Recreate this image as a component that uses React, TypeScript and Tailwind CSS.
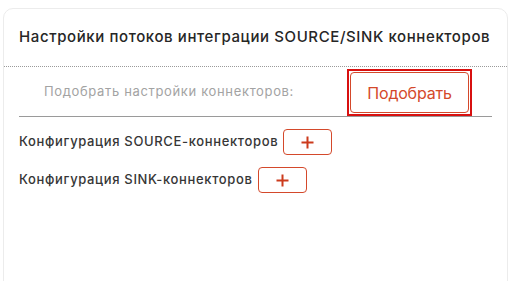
export default function App() {
  const rows = ["Конфигурация SOURCE-коннекторов", "Конфигурация SINK-коннекторов"];

  return (
    <div className="h-[281px] w-[511px] overflow-hidden bg-white pl-[3px] pr-[3px] pt-[8px] font-[Inter,sans-serif]">
      <div className="h-[300px] rounded-t-[10px] border border-[#ececec] bg-white">
        {/* header */}
        <div className="flex h-[58px] items-center border-b border-dotted border-[#9a9a9a] px-[15px]">
          <h1 className="whitespace-nowrap text-[15px] font-medium tracking-[0.6px] text-[#262626]">
            Настройки потоков интеграции SOURCE/SINK коннекторов
          </h1>
        </div>

        <div className="px-[15px]">
          {/* picker row */}
          <div className="flex h-[50px] items-center justify-between border-b border-[#9a9a9a] pl-[25px] pr-[20px]">
            <span className="text-[13px] tracking-[0.65px] text-[#a3a3a3]">Подобрать настройки коннекторов:</span>
            <span className="mt-[2px] border-2 border-[#d81010] p-[1px]">
              <button className="flex h-[41px] w-[119px] items-center justify-center rounded-[4px] border border-[#d4492b] text-[16px] tracking-[-0.2px] text-[#d4492b]">
                Подобрать
              </button>
            </span>
          </div>

          {/* connector rows */}
          <div className="flex flex-col gap-[12px] pt-[12px]">
            {rows.map((r) => (
              <div key={r} className="flex items-center gap-[5px]">
                <span className="whitespace-nowrap text-[13px] font-medium tracking-[0.65px] text-[#363636]">{r}</span>
                <button className="flex h-[26px] w-[49px] items-center justify-center rounded-[4px] border border-[#d4492b]">
                  <svg width="13" height="13" viewBox="0 0 13 13">
                    <path d="M6.5 0.5v12M0.5 6.5h12" stroke="#cc3b1d" strokeWidth="2" />
                  </svg>
                </button>
              </div>
            ))}
          </div>
        </div>
      </div>
    </div>
  );
}
